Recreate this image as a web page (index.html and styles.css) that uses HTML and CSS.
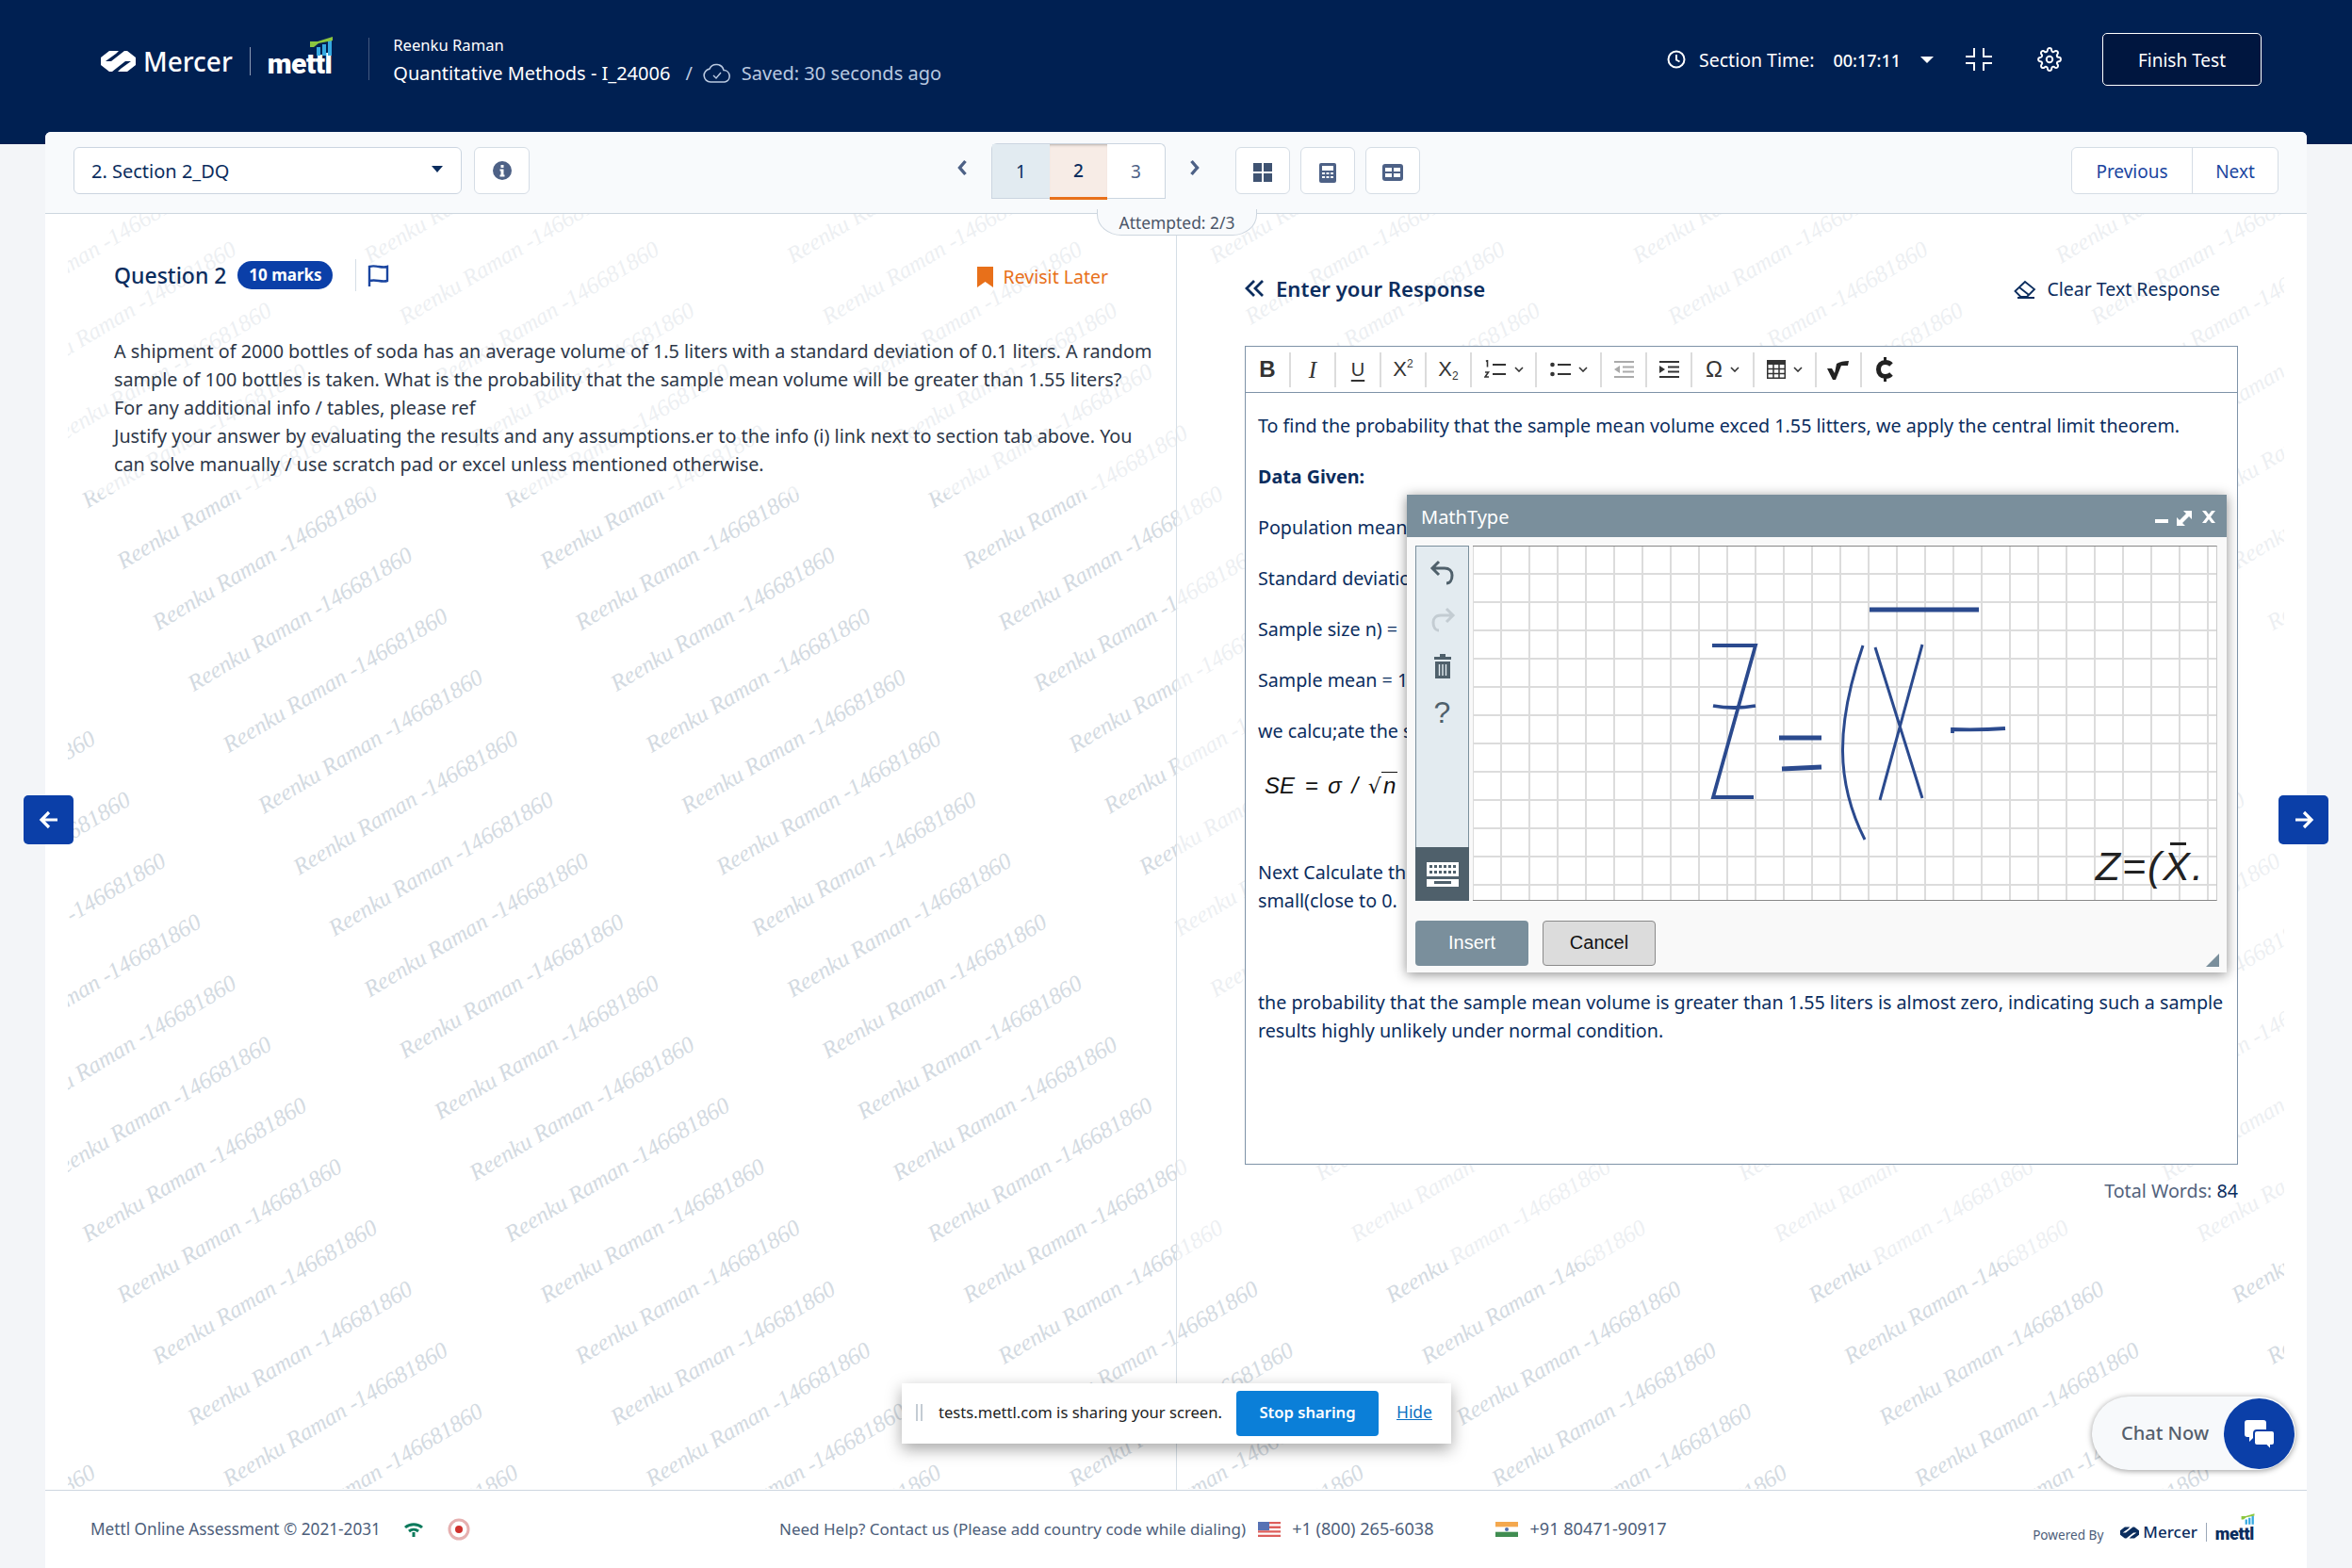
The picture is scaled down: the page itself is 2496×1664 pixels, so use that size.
FILE: index.html
```html
<!DOCTYPE html>
<html lang="en">
<head>
<meta charset="utf-8">
<title>Mettl Online Assessment</title>
<link rel="stylesheet" href="styles.css">
</head>
<body>
<header class="topbar">
  <div class="brand">
    <svg class="mercer-mark" viewBox="0 0 37 22" aria-hidden="true"><path fill="#fff" d="M0 7 9 0h10l-3 3-11 8 6 0 14-11h3l9 7v8l-9 7H18l3-3 11-8h-6L12 22H9l-9-7z"/></svg>
    <span class="mercer-word">Mercer</span>
    <span class="brand-rule"></span>
    <span class="mettl-word">mettl
      <svg class="mettl-bars" viewBox="0 0 26 20" aria-hidden="true"><path fill="#36a9e1" d="M8 11h4v9H8zM14 8h4v12h-4zM20 4h4v16h-4z"/><path fill="#8cc63f" d="M1 5v6l4 0 5-4 15-3V0L9 5z"/></svg>
    </span>
  </div>
  <span class="top-rule"></span>
  <div class="who">
    <div class="who-name">Reenku Raman</div>
    <div class="who-test"><span>Quantitative Methods - I_24006</span><span class="slash">/</span>
      <svg class="cloud" viewBox="0 0 32 24" aria-hidden="true"><path fill="none" stroke="#b9c9e0" stroke-width="1.6" d="M24 21H9a7 7 0 0 1-1-13.9A8 8 0 0 1 23 8.500a6.300 6.300 0 0 1 1 12.500z"/><path fill="none" stroke="#b9c9e0" stroke-width="1.4" d="m12 14 3 3 5-6"/></svg>
      <span class="saved">Saved: 30 seconds ago</span></div>
  </div>
  <div class="top-right">
    <svg class="clock" viewBox="0 0 22 22" aria-hidden="true"><circle cx="11" cy="11" r="8.500" fill="none" stroke="#fff" stroke-width="2"/><path fill="none" stroke="#fff" stroke-width="2" d="M11 6v5.500l3.500 2"/></svg>
    <span class="time-label">Section Time:</span>
    <span class="time-value">00:17:11</span>
    <span class="time-caret"></span>
    <svg class="compress" viewBox="0 0 28 24" aria-hidden="true"><path fill="none" stroke="#fff" stroke-width="2" d="M9 0v9H0M19 0v9h9M9 24v-8H0M19 24v-8h9"/></svg>
    <svg class="gear" viewBox="0 0 24 24" aria-hidden="true"><circle cx="12" cy="12" r="3" fill="none" stroke="#fff" stroke-width="1.800"/><path fill="none" stroke="#fff" stroke-width="1.800" d="M19.400 15a1.650 1.650 0 0 0 .33 1.820l.06.06a2 2 0 0 1 0 2.830 2 2 0 0 1-2.830 0l-.06-.06a1.650 1.650 0 0 0-1.820-.33 1.650 1.650 0 0 0-1 1.510V21a2 2 0 0 1-2 2 2 2 0 0 1-2-2v-.09A1.650 1.650 0 0 0 9 19.400a1.650 1.650 0 0 0-1.820.33l-.06.06a2 2 0 0 1-2.830 0 2 2 0 0 1 0-2.830l.06-.06a1.650 1.650 0 0 0 .33-1.820 1.650 1.650 0 0 0-1.510-1H3a2 2 0 0 1-2-2 2 2 0 0 1 2-2h.09A1.650 1.650 0 0 0 4.600 9a1.650 1.650 0 0 0-.33-1.820l-.06-.06a2 2 0 0 1 0-2.830 2 2 0 0 1 2.830 0l.06.06a1.650 1.650 0 0 0 1.820.33H9a1.650 1.650 0 0 0 1-1.510V3a2 2 0 0 1 2-2 2 2 0 0 1 2 2v.09a1.650 1.650 0 0 0 1 1.510 1.650 1.650 0 0 0 1.820-.33l.06-.06a2 2 0 0 1 2.830 0 2 2 0 0 1 0 2.830l-.06.06a1.650 1.650 0 0 0-.33 1.820V9a1.650 1.650 0 0 0 1.510 1H21a2 2 0 0 1 2 2 2 2 0 0 1-2 2h-.09a1.650 1.650 0 0 0-1.510 1z"/></svg>
    <button class="finish">Finish Test</button>
  </div>
</header>

<main class="sheet">
  <div class="strip">
    <div class="section-select"><span>2. Section 2_DQ</span><i class="caret"></i></div>
    <div class="square info"><svg viewBox="0 0 20 20" aria-hidden="true"><circle cx="10" cy="10" r="10" fill="#4d6186"/><rect x="8.500" y="4" width="3" height="3" fill="#fff"/><path fill="#fff" d="M7.500 8.500h4v6h1v2h-5v-2h1v-4h-1z"/></svg></div>
    <svg class="nav-chev left-chev" viewBox="0 0 12 18" aria-hidden="true"><path fill="none" stroke="#4d6186" stroke-width="3.400" d="M9.500 2 3.500 9l6 7"/></svg>
    <div class="pager"><span class="cell seen">1</span><span class="cell current">2</span><span class="cell">3</span></div>
    <svg class="nav-chev right-chev" viewBox="0 0 12 18" aria-hidden="true"><path fill="none" stroke="#4d6186" stroke-width="3.400" d="m2.500 2 6 7-6 7"/></svg>
    <div class="square tool"><svg width="20" height="20" viewBox="0 0 20 20" aria-hidden="true"><path fill="#3f5372" d="M0 0h9v9H0zM11 0h9v9h-9zM0 11h9v9H0zM11 11h9v9h-9z"/></svg></div>
    <div class="square tool"><svg width="18" height="21" viewBox="0 0 18 21" aria-hidden="true"><rect width="18" height="21" rx="2" fill="#4d6186"/><rect x="3" y="3" width="12" height="5" fill="#fff"/><path fill="#fff" d="M3 10h3v2H3zM7.500 10h3v2h-3zM12 10h3v2h-3zM3 14h3v2H3zM7.500 14h3v2h-3zM12 14h3v2h-3z"/></svg></div>
    <div class="square tool"><svg width="22" height="18" viewBox="0 0 22 18" aria-hidden="true"><rect width="22" height="18" rx="3" fill="#4d6186"/><path fill="#fff" d="M3 4h7v4H3zM12 4h7v4h-7zM3 10h7v4H3zM12 10h7v4h-7z"/></svg></div>
    <div class="prev-next"><span class="pn-prev">Previous</span><span class="pn-next">Next</span></div>
  </div>

  <div class="stage">
    <svg class="watermark" width="2352" height="1353" aria-hidden="true">
      <defs>
        <text id="wm-line" class="wm-text" transform="rotate(-31)">Reenku Raman -146681860</text>
        <g id="wm-col">
          <use href="#wm-line" x="0" y="0"/>
          <use href="#wm-line" transform="translate(37.4 64.9)"/>
          <use href="#wm-line" transform="translate(74.8 129.8)"/>
          <use href="#wm-line" transform="translate(112.2 194.7)"/>
          <use href="#wm-line" transform="translate(149.6 259.6)"/>
          <use href="#wm-line" transform="translate(187 324.5)"/>
          <use href="#wm-line" transform="translate(224.4 389.4)"/>
          <use href="#wm-line" transform="translate(261.8 454.3)"/>
          <use href="#wm-line" transform="translate(299.2 519.2)"/>
          <use href="#wm-line" transform="translate(336.6 584.1)"/>
          <use href="#wm-line" transform="translate(374 649)"/>
          <use href="#wm-line" transform="translate(411.4 713.9)"/>
          <use href="#wm-line" transform="translate(448.8 778.8)"/>
          <use href="#wm-line" transform="translate(486.2 843.7)"/>
          <use href="#wm-line" transform="translate(523.6 908.6)"/>
          <use href="#wm-line" transform="translate(561 973.5)"/>
          <use href="#wm-line" transform="translate(598.4 1038.4)"/>
          <use href="#wm-line" transform="translate(635.8 1103.3)"/>
          <use href="#wm-line" transform="translate(673.2 1168.2)"/>
          <use href="#wm-line" transform="translate(710.6 1233.1)"/>
          <use href="#wm-line" transform="translate(748 1298)"/>
          <use href="#wm-line" transform="translate(785.4 1362.9)"/>
          <use href="#wm-line" transform="translate(822.8 1427.8)"/>
        </g>
      </defs>
      <use href="#wm-col" transform="translate(-1026 53)"/>
      <use href="#wm-col" transform="translate(-577.2 53)"/>
      <use href="#wm-col" transform="translate(-128.4 53)"/>
      <use href="#wm-col" transform="translate(320.4 53)"/>
      <use href="#wm-col" transform="translate(769.2 53)"/>
      <use href="#wm-col" transform="translate(1218 53)"/>
      <use href="#wm-col" transform="translate(1666.8 53)"/>
      <use href="#wm-col" transform="translate(2115.6 53)"/>
    </svg>

    <section class="panel question-panel">
      <div class="veil question-veil">
        <div class="q-head">
          <h2 class="q-title">Question 2</h2>
          <span class="badge">10 marks</span>
          <span class="q-rule"></span>
          <svg class="flag" viewBox="0 0 23 23" aria-hidden="true"><path fill="none" stroke="#1a45a0" stroke-width="2.400" d="M2 23V2c5-1.500 7 0 10 0 3 .5 6 1 9 0v15c-3 1-6 .5-9 0s-6-1-10 0"/></svg>
          <div class="revisit"><svg viewBox="0 0 17 22" aria-hidden="true"><path fill="#e8701a" d="M0 0h17v22l-8.500-6L0 22z"/></svg><span>Revisit Later</span></div>
        </div>
        <p class="q-text">A shipment of 2000 bottles of soda has an average volume of 1.5 liters with a standard deviation of 0.1 liters. A random<br>sample of 100 bottles is taken. What is the probability that the sample mean volume will be greater than 1.55 liters?<br>For any additional info / tables, please ref<br>Justify your answer by evaluating the results and any assumptions.er to the info (i) link next to section tab above. You<br>can solve manually / use scratch pad or excel unless mentioned otherwise.</p>
      </div>
    </section>

    <section class="panel response-panel">
      <div class="veil response-veil">
        <div class="r-head">
          <svg class="dbl-chev" viewBox="0 0 20 18" aria-hidden="true"><path fill="none" stroke="#0b2d5e" stroke-width="2.800" d="M10 1 2 9l8 8M19 1l-8 8 8 8"/></svg>
          <h2 class="r-title">Enter your Response</h2>
          <div class="clear-text"><svg viewBox="0 0 24 20" aria-hidden="true"><path fill="none" stroke="#0b2d5e" stroke-width="1.800" d="M1.500 12 12 2l10 8-8 8H7.500zM6 8l9.500 7.500M4 19h18"/></svg><span>Clear Text Response</span></div>
        </div>
        <div class="editor">
          <div class="ed-tools">
            <span class="ed-btn ed-b">B</span>
            <span class="ed-btn ed-i">I</span>
            <span class="ed-btn ed-u">U</span>
            <span class="ed-btn ed-x">X<sup>2</sup></span>
            <span class="ed-btn ed-x">X<sub>2</sub></span>
            <span class="ed-btn wide"><svg width="24" height="20" viewBox="0 0 24 20" aria-hidden="true"><path stroke="#333" stroke-width="2" d="M9 5h14M9 15h14"/><path stroke="#333" stroke-width="1.600" fill="none" d="M2 1.500l1.500-1v7M1 13h3.500l-3.500 5h4"/></svg><svg class="mini" viewBox="0 0 10 6" aria-hidden="true"><path fill="none" stroke="#333" stroke-width="1.600" d="m1 1 4 4 4-4"/></svg></span>
            <span class="ed-btn wide"><svg width="22" height="20" viewBox="0 0 22 20" aria-hidden="true"><path stroke="#333" stroke-width="2" d="M8 5h14M8 15h14"/><circle cx="2.500" cy="5" r="2.300" fill="#333"/><circle cx="2.500" cy="15" r="2.300" fill="#333"/></svg><svg class="mini" viewBox="0 0 10 6" aria-hidden="true"><path fill="none" stroke="#333" stroke-width="1.600" d="m1 1 4 4 4-4"/></svg></span>
            <span class="ed-btn"><svg width="21" height="18" viewBox="0 0 21 18" aria-hidden="true"><path stroke="#aaa" stroke-width="2" fill="none" d="M0 1h21M9 6.500h12M9 11.500h12M0 17h21"/><path fill="#aaa" d="M6 5v8L0 9z"/></svg></span>
            <span class="ed-btn"><svg width="21" height="18" viewBox="0 0 21 18" aria-hidden="true"><path stroke="#333" stroke-width="2" fill="none" d="M0 1h21M9 6.500h12M9 11.500h12M0 17h21"/><path fill="#333" d="M0 5v8l6-4z"/></svg></span>
            <span class="ed-btn wide-o"><span class="omega">Ω</span><svg class="mini" viewBox="0 0 10 6" aria-hidden="true"><path fill="none" stroke="#333" stroke-width="1.600" d="m1 1 4 4 4-4"/></svg></span>
            <span class="ed-btn wide-o"><svg width="20" height="20" viewBox="0 0 20 20" aria-hidden="true"><path fill="#333" d="M0 0h20v5H0z"/><path fill="none" stroke="#333" stroke-width="1.500" d="M.75 1v18.250h18.500V1M.75 9.500h18.500M.75 14.500h18.500M7 4v15M13 4v15"/></svg><svg class="mini" viewBox="0 0 10 6" aria-hidden="true"><path fill="none" stroke="#333" stroke-width="1.600" d="m1 1 4 4 4-4"/></svg></span>
            <span class="ed-btn"><svg width="24" height="22" viewBox="0 0 24 22" aria-hidden="true"><path fill="#222" d="M0 10h5l3 5L10 5c3-2 8-3 13-3l-1 5h-7L9 22H6z"/></svg></span>
            <span class="ed-btn last"><svg width="20" height="26" viewBox="0 0 20 26" aria-hidden="true"><path fill="none" stroke="#222" stroke-width="5" d="M17 8c-1.500-1.500-3.500-2.500-6-2.500C6.500 5.500 3.500 8.500 3.500 13s3 7.500 7.500 7.500c2.500 0 4.500-1 6-2.500"/><path fill="#222" d="M9 0h3v4H9zM9 22h3v4H9z"/></svg></span>
          </div>
          <div class="ed-body">
            <p>To find the probability that the sample mean volume exced 1.55 litters, we apply the central limit theorem.</p>
            <p><strong>Data Given:</strong></p>
            <p>Population mean</p>
            <p>Standard deviatio</p>
            <p>Sample size n) =</p>
            <p>Sample mean = 1</p>
            <p>we calcu;ate the s</p>
            <p class="equation">SE = σ / <span class="radical">√</span><span class="under-root">n</span></p>
            <p>Next Calculate th<br>small(close to 0.</p>
            <p class="blank"></p>
            <p>the probability that the sample mean volume is greater than 1.55 liters is almost zero, indicating such a sample<br>results highly unlikely under normal condition.</p>
          </div>
        </div>
        <div class="word-count">Total Words: <b>84</b></div>
      </div>
    </section>

    <div class="attempted">Attempted: 2/3</div>

    <div class="mathtype">
      <div class="mt-title"><span>MathType</span>
        <svg class="mt-ctrl" viewBox="0 0 66 20" aria-hidden="true"><path fill="#fff" d="M0 13h14v4H0zM26 14l7-7-3-3h9v9l-3-3-7 7 3 3h-9v-9zM50 4h4l3 4 3-4h4l-5 6.500L64 17h-4l-3-4-3 4h-4l5-6.500z"/></svg>
      </div>
      <div class="mt-work">
        <div class="mt-side">
          <div class="mt-side-tools">
            <svg viewBox="0 0 30 30" width="30" height="30" aria-hidden="true"><path fill="none" stroke="#4f606b" stroke-width="3" d="M11 3 4 10l7 7M4 10h13c5 0 8 3 8 7.500S23 26 19 26"/></svg>
            <svg viewBox="0 0 30 30" width="30" height="30" aria-hidden="true"><path fill="none" stroke="#c3ccd2" stroke-width="3" d="m19 3 7 7-7 7M26 10H13c-5 0-8 3-8 7.500S7 26 11 26"/></svg>
            <svg class="mt-trash" viewBox="0 0 20 26" width="20" height="26" aria-hidden="true"><path fill="#4f606b" d="M7 0h6v3h6v3H1V3h6zM2 8h16v18H2z"/><path stroke="#e3ebf0" stroke-width="1.400" d="M6.500 11v12M10 11v12M13.500 11v12"/></svg>
            <span class="mt-q">?</span>
          </div>
          <div class="mt-kbd"><svg viewBox="0 0 34 26" width="34" height="26" aria-hidden="true"><path fill="#fff" d="M0 0h34v15H0zM0 18h34v8H0z"/><path fill="#4f606b" d="M3 3h3v3H3zM8 3h3v3H8zM13 3h3v3h-3zM18 3h3v3h-3zM23 3h3v3h-3zM28 3h3v3h-3zM3 9h3v3H3zM8 9h3v3H8zM13 9h3v3h-3zM18 9h3v3h-3zM23 9h3v3h-3zM28 9h3v3h-3zM8 20h18v3H8z"/></svg></div>
        </div>
        <div class="mt-canvas">
          <svg class="ink" width="790" height="376" viewBox="0 0 790 376" aria-hidden="true"><g fill="none" stroke="#2b4a8e" stroke-width="3.800">
            <path d="M254 105h46l-45 161h43M255 169q22 4 45 0"/><path stroke-width="5" d="M325 203h45M328 236l42-2"/><path stroke-width="3" d="M414 105c-29 85-29 145 2 206"/><path stroke-width="3" d="m427 107 50 160M477 104l-45 165"/><path stroke-width="5" d="M421 67h116"/><path d="M509 198v-4q28 1 56-1"/></g></svg>
          <div class="mt-result">Z=(<span class="xbar">X</span>.</div>
        </div>
      </div>
      <div class="mt-actions"><button class="mt-insert">Insert</button><button class="mt-cancel">Cancel</button></div>
      <i class="mt-grip"></i>
    </div>

    <div class="share-bar">
      <span class="grip-bars"></span>
      <span class="share-msg">tests.mettl.com is sharing your screen.</span>
      <button class="stop-share">Stop sharing</button>
      <a class="hide-link">Hide</a>
    </div>

    <div class="chat-pill">
      <span class="chat-label">Chat Now</span>
      <span class="chat-disc"><svg viewBox="0 0 34 34" width="34" height="34" aria-hidden="true"><path fill="#fff" d="M4 2h17a3 3 0 0 1 3 3v12a3 3 0 0 1-3 3H11l-5 5v-5H4a3 3 0 0 1-3-3V5a3 3 0 0 1 3-3z"/><path fill="#fff" stroke="#0b3fa8" stroke-width="2" d="M14 13h16a3 3 0 0 1 3 3v10a3 3 0 0 1-3 3h-1v5l-5-5H14a3 3 0 0 1-3-3V16a3 3 0 0 1 3-3z"/></svg></span>
    </div>
  </div>

  <footer class="foot">
    <div class="foot-left">
      <span>Mettl Online Assessment © 2021-2031</span>
      <svg class="wifi" viewBox="0 0 22 16" aria-hidden="true"><path fill="none" stroke="#0b7a5c" stroke-width="3" d="M2 6c5-4.500 13-4.500 18 0M6 10c3-2.500 7-2.500 10 0"/><rect x="9.500" y="11" width="3" height="5" fill="#0b7a5c"/></svg>
      <svg class="rec" viewBox="0 0 24 24" aria-hidden="true"><circle cx="12" cy="12" r="10" fill="none" stroke="#e6b0b0" stroke-width="3"/><circle cx="12" cy="12" r="4" fill="#d0312d"/></svg>
    </div>
    <div class="foot-help">
      <span>Need Help? Contact us (Please add country code while dialing)</span>
      <svg class="flag-mini" viewBox="0 0 24 16" aria-hidden="true"><rect width="24" height="16" fill="#fff"/><path fill="#d8433f" d="M0 0h24v2.300H0zM0 4.600h24v2.300H0zM0 9.200h24v2.300H0zM0 13.700h24V16H0z"/><rect width="12" height="9" fill="#3b5aa8"/></svg>
      <span class="ph">+1 (800) 265-6038</span>
      <svg class="flag-mini flag-in" viewBox="0 0 24 16" aria-hidden="true"><rect width="24" height="16" fill="#fff"/><rect width="24" height="5.300" fill="#f39a30"/><rect y="10.700" width="24" height="5.300" fill="#1f7a33"/><circle cx="12" cy="8" r="2" fill="#33589e"/></svg>
      <span class="ph">+91 80471-90917</span>
    </div>
    <div class="foot-power">
      <span class="powered">Powered By</span>
      <svg class="mercer-mark small" viewBox="0 0 37 22" aria-hidden="true"><path fill="#0b2d5e" d="M0 7 9 0h10l-3 3-11 8 6 0 14-11h3l9 7v8l-9 7H18l3-3 11-8h-6L12 22H9l-9-7z"/></svg>
      <span class="mercer-word small">Mercer</span>
      <span class="brand-rule small"></span>
      <span class="mettl-word small">mettl
        <svg class="mettl-bars" viewBox="0 0 26 20" aria-hidden="true"><path fill="#36a9e1" d="M8 11h4v9H8zM14 8h4v12h-4zM20 4h4v16h-4z"/><path fill="#8cc63f" d="M1 5v6l4 0 5-4 15-3V0L9 5z"/></svg>
      </span>
    </div>
  </footer>
</main>

<button class="side-arrow side-left"><svg viewBox="0 0 24 24" width="24" height="24" aria-hidden="true"><path fill="none" stroke="#fff" stroke-width="3.200" d="M12 4l-8 8 8 8M4 12h17"/></svg></button>
<button class="side-arrow side-right"><svg viewBox="0 0 24 24" width="24" height="24" aria-hidden="true"><path fill="none" stroke="#fff" stroke-width="3.200" d="m12 4 8 8-8 8M20 12H3"/></svg></button>
</body>
</html>
```

FILE: styles.css
```css
* { box-sizing: border-box; }
html, body { margin: 0; padding: 0; }
body {
  width: 2496px; height: 1664px; overflow: hidden; position: relative;
  background: #f3f5f8; color: #2d3748;
  font-family: "Noto Sans", "Open Sans", sans-serif; font-size: 20px; line-height: 30px;
}
p, h2 { margin: 0; }
button { font-family: inherit; cursor: pointer; }

.topbar {
  height: 153px; background: #002052; color: #fff; padding: 35px 96px 0 107px;
  display: flex; align-items: flex-start;
}
.brand { display: flex; align-items: center; height: 60px; }
.mercer-mark { width: 37px; height: 22px; }
.mercer-word { font-size: 28px; font-weight: 500; margin-left: 8px; line-height: 30px; }
.brand-rule { width: 1px; height: 30px; background: #8c9bb4; margin: 0 18px; }
.mettl-word {
  position: relative; font-family: "Roboto", sans-serif; font-weight: 900; font-size: 30px; line-height: 30px;
  letter-spacing: -0.5px; display: inline-block; margin-top: 6px;
}
.mettl-bars { position: absolute; right: -2px; top: -14px; width: 26px; height: 20px; }
.top-rule { width: 1px; height: 45px; background: #44597f; margin: 5px 25px 0 39px; }
.who { line-height: 30px; }
.who-name { font-size: 16.6px; margin-top: 0; line-height: 26px; }
.who-test { font-size: 20px; display: flex; align-items: center; margin-top: 2px; }
.slash { color: #b9c9e0; margin: 0 10px 0 16px; }
.cloud { width: 32px; height: 24px; margin: 0 10px 0 0; }
.saved { color: #b9c9e0; }
.top-right { margin-left: auto; display: flex; align-items: center; height: 56px; }
.clock { width: 22px; height: 22px; margin-right: 13px; }
.time-label { font-size: 19.5px; margin-top: 2px; }
.time-value { font-size: 18px; font-weight: 500; margin: 2px 0 0 20px; }
.time-caret { width: 0; height: 0; border: 7px solid transparent; border-top: 7px solid #fff; border-bottom: 0; margin-left: 21px; }
.compress { width: 28px; height: 24px; margin-left: 34px; }
.gear { width: 26px; height: 26px; margin-left: 48px; }
.finish {
  width: 169px; height: 56px; margin-left: 43px; padding-top: 3px; background: #00163f; color: #fff; font-size: 19px;
  border: 1px solid #fff; border-radius: 5px;
}

.sheet {
  margin: -13px 48px 0; height: 1524px; background: #fff; border-radius: 6px 6px 0 0;
  display: flex; flex-direction: column; position: relative; overflow: hidden;
}
.strip {
  height: 87px; flex: none; background: #f8fafc; border-bottom: 1px solid #cdd6df;
  padding: 16px 30px 0; display: flex; align-items: flex-start;
}
.section-select {
  width: 412px; height: 50px; background: #fff; border: 1px solid #cbd5e0; border-radius: 6px;
  display: flex; align-items: center; justify-content: space-between; padding: 2px 19px 0 18px; color: #0b2d5e; font-size: 20px;
}
.caret { width: 0; height: 0; border: 6px solid transparent; border-top: 7px solid #0b2d5e; border-bottom: 0; margin-top: -6px; }
.square {
  width: 59px; height: 50px; background: #fff; border: 1px solid #d5dde5; border-radius: 6px;
  display: flex; align-items: center; justify-content: center; flex: none;
}
.info { margin-left: 13px; }
.info svg { width: 20px; height: 20px; }
.nav-chev { width: 12px; height: 18px; flex: none; margin-top: 13px; }
.left-chev { margin-left: 453px; }
.pager {
  margin: -4px 0 0 25px; width: 185px; height: 59px; display: flex; border: 1px solid #cbd5e0; border-radius: 6px 6px 0 0; border-bottom: 0;
  background: #fff; color: #4d6186; font-size: 19px; position: relative;
}
.cell { flex: 1; display: flex; align-items: center; justify-content: center; }
.cell.seen { background: #e2ebf1; color: #0b2d5e; }
.cell.current { background: #f7ece6; color: #0b2d5e; font-weight: 500; box-shadow: inset 0 3px 3px -2px #b5aca6; border-bottom: 3px solid #e8701a; height: 59px; }
.cell.seen, .cell:last-child { border-bottom: 1px solid #cbd5e0; height: 58px; }
.right-chev { margin-left: 25px; margin-right: 37px; }
.tool { width: 58px; margin-right: 11px; padding-top: 4px; }
.prev-next {
  margin-left: auto; width: 220px; height: 50px; background: #fff; border: 1px solid #d5dde5; border-radius: 6px;
  display: flex; color: #1a45a0; font-size: 19px;
}
.pn-prev { width: 128px; padding-top: 2px; border-right: 1px solid #d5dde5; display: flex; align-items: center; justify-content: center; }
.pn-next { flex: 1; padding-top: 2px; display: flex; align-items: center; justify-content: center; }

.stage { flex: 1; position: relative; display: flex; background: #fff; }
.watermark { position: absolute; left: 24px; top: 0; z-index: 0; }
.wm-text { font-family: "Liberation Serif", serif; font-style: italic; font-size: 24.6px; fill: #d3dae1; }
.panel { position: relative; z-index: 1; }
.question-panel { width: 1201px; border-right: 1px solid #d5dee6; }
.response-panel { flex: 1; }
.veil { background: rgba(255, 255, 255, 0.58); }
.question-veil { height: 296px; margin-left: 24px; padding: 48px 24px 0 49px; }
.response-veil { height: 1113px; margin-right: 24px; padding: 62px 49px 0 72px; }

.q-head { display: flex; align-items: center; height: 34px; padding-right: 48px; }
.q-title { font-size: 23px; font-weight: 500; color: #0b2d5e; line-height: 34px; }
.badge {
  margin-left: 12px; width: 101px; height: 30px; border-radius: 15px; background: #0b3fa8; color: #fff;
  font-size: 17px; font-weight: 700; display: flex; align-items: center; justify-content: center;
}
.q-rule { width: 1px; height: 34px; background: #d5dee6; margin: 0 12px 0 24px; }
.flag { width: 23px; height: 23px; }
.revisit { margin-left: auto; display: flex; align-items: center; gap: 11px; color: #e8701a; font-size: 19.5px; margin-top: 3px; }
.revisit svg { width: 17px; height: 22px; }
.q-text { margin-top: 49px; white-space: nowrap; font-size: 19.78px; color: #2d3748; }

.r-head { display: flex; align-items: center; height: 34px; }
.dbl-chev { width: 20px; height: 18px; margin-right: 13px; }
.r-title { font-size: 22.1px; font-weight: 600; color: #0b2d5e; line-height: 34px; }
.clear-text { margin: 2px 0 0 auto; padding-right: 19px; display: flex; align-items: center; gap: 11px; color: #0b2d5e; font-size: 19.5px; }
.clear-text svg { width: 24px; height: 20px; }
.editor {
  margin-top: 44px; height: 869px; border: 1px solid #7f93a8; background: #fff;
}
.ed-tools { height: 49px; border-bottom: 1px solid #7f93a8; display: flex; align-items: center; }
.ed-btn {
  width: 48px; height: 37px; border-right: 2px solid #dcdcdc; display: flex; align-items: center; justify-content: center; gap: 8px;
  color: #333; font-family: "Liberation Sans", sans-serif; font-size: 22px; line-height: 1; flex: none;
}
.ed-btn.last { border-right: 0; }
.ed-btn.wide { width: 69px; }
.ed-btn.wide-o { width: 66px; }
.ed-b { font-weight: 700; font-size: 24px; }
.ed-i { font-family: "Liberation Serif", serif; font-style: italic; font-size: 25px; }
.ed-u { text-decoration: underline; font-size: 20px; text-underline-offset: 4px; }
.ed-btn.ed-x { gap: 0; }
.ed-x sup, .ed-x sub { font-size: 12px; line-height: 0; }
.ed-x sup { margin-top: -12px; }
.ed-x sub { margin-top: 14px; }
.omega { font-size: 24px; }
.mini { width: 10px; height: 6px; }
.ed-body { padding: 20px 13px 0; color: #0b2d5e; font-size: 19.7px; white-space: nowrap; }
.ed-body p { margin-bottom: 24px; min-height: 30px; }
.ed-body p.equation {
  height: 72px; padding-left: 7px; color: #111; font-family: "Liberation Sans", sans-serif; font-style: italic; font-size: 24px;
  line-height: 38px; word-spacing: 4px;
}
.radical { font-style: normal; font-family: "DejaVu Sans", sans-serif; font-size: 22px; }
.under-root { border-top: 1.5px solid #111; padding: 0 2px; }
.word-count { text-align: right; margin-top: 13px; color: #52627c; font-size: 19.7px; line-height: 30px; }
.word-count b { font-weight: 400; color: #0b2d5e; }

.attempted {
  position: absolute; left: 1116px; top: -5px; width: 170px; height: 28px; z-index: 2; background: #f8fafc;
  border: 1px solid #cdd6df; border-top: 0; border-radius: 0 0 26px 26px / 0 0 22px 22px;
  color: #4a5568; font-size: 17.4px; line-height: 28px; text-align: center;
}

.mathtype {
  position: absolute; left: 1445px; top: 298px; width: 870px; height: 507px; z-index: 3; background: #f9f9f9;
  box-shadow: 0 2px 12px rgba(0, 0, 0, 0.45); display: flex; flex-direction: column;
}
.mt-title {
  height: 45px; flex: none; background: #7a8f9c; color: #fff; font-size: 20px; padding: 2px 10px 0 15px;
  display: flex; align-items: center; justify-content: space-between;
}
.mt-ctrl { width: 66px; height: 20px; margin-top: -2px; }
.mt-work { display: flex; margin: 9px 10px 0 9px; gap: 4px; height: 377px; flex: none; }
.mt-side { width: 57px; flex: none; background: #e3ebf0; border: 1px solid #7a8f9c; border-bottom: 0; display: flex; flex-direction: column; }
.mt-side-tools { flex: 1; display: flex; flex-direction: column; align-items: center; padding-top: 13px; gap: 20px; }
.mt-trash { margin-top: 1px; }
.mt-q { font-family: "Liberation Sans", sans-serif; font-size: 32px; line-height: 28px; color: #4f606b; margin-top: 2px; }
.mt-kbd { height: 57px; margin: 0 -1px; background: #4f606b; display: flex; align-items: center; justify-content: center; }
.mt-canvas {
  flex: 1; position: relative; border-top: 1px solid #888; border-bottom: 1px solid #888; border-right: 1px solid #ccc;
  background-color: #fff;
  background-image:
    linear-gradient(#dcdcdc 2px, transparent 2px),
    linear-gradient(90deg, #dcdcdc 2px, transparent 2px);
  background-size: 30px 30px;
  background-position: -1px -2px;
}
.ink { position: absolute; left: 0; top: 0; }
.mt-result {
  position: absolute; right: 12px; top: 314px; color: #222; font-family: "Liberation Sans", sans-serif; font-style: italic; font-size: 43px; line-height: 50px; letter-spacing: 2px;
}
.xbar { position: relative; }
.xbar::before { content: ""; position: absolute; left: 8px; right: 6px; top: -1px; height: 3px; background: #222; }
.mt-actions { display: flex; gap: 15px; margin: 21px 0 0 9px; }
.mt-actions button { width: 120px; height: 48px; padding-bottom: 3px; border-radius: 4px; font-family: "Liberation Sans", sans-serif; font-size: 20px; }
.mt-insert { background: #7a8f9c; color: #fff; border: 0; }
.mt-cancel { background: #dcdcdc; color: #111; border: 1px solid #8a8a8a; }
.mt-grip {
  position: absolute; right: 8px; bottom: 6px; width: 0; height: 0;
  border-left: 14px solid transparent; border-bottom: 14px solid #7a8f9c;
}

.share-bar {
  position: absolute; left: 909px; top: 1241px; width: 583px; height: 64px; z-index: 4; background: #fff;
  box-shadow: 0 6px 16px rgba(0, 0, 0, 0.35); display: flex; align-items: center; padding: 0 0 2px 15px; font-size: 16.6px; color: #222;
}
.grip-bars { width: 7px; height: 18px; border-left: 2px solid #c4ccd4; border-right: 2px solid #c4ccd4; margin-right: 17px; }
.share-msg { white-space: nowrap; }
.stop-share {
  position: absolute; left: 355px; top: 8px; width: 151px; height: 48px; background: #0b7fd8; color: #fff; border: 0; border-radius: 4px; font-size: 16.6px; font-weight: 600; padding-bottom: 4px;
}
.hide-link { position: absolute; left: 525px; top: 15px; font-size: 17.4px; color: #0b6fc2; text-decoration: underline; }

.chat-pill {
  position: absolute; left: 2172px; top: 1255px; width: 216px; height: 78px; z-index: 4; background: #f7f9fb; border-radius: 39px;
  box-shadow: 0 1px 6px rgba(0, 0, 0, 0.4); display: flex; align-items: center; padding-left: 31px;
}
.chat-label { color: #555f6c; font-size: 20px; font-weight: 500; white-space: nowrap; }
.chat-disc { position: absolute; right: 1px; top: 2px; width: 75px; height: 75px; border-radius: 50%; background: #0b3fa8; display: flex; align-items: center; justify-content: center; }

.foot {
  height: 83px; flex: none; border-top: 1px solid #cdd6df; background: #fff; color: #4d5e7a; font-size: 17px;
  display: grid; grid-template-columns: 731px 1fr auto; align-items: center; padding: 0 56px 0 48px; white-space: nowrap;
}
.foot-left, .foot-help, .foot-power { display: flex; align-items: center; }
.foot-left span { font-size: 17.2px; }
.wifi { width: 22px; height: 16px; margin-left: 24px; }
.rec { width: 24px; height: 24px; margin-left: 25px; }
.flag-mini { width: 24px; height: 16px; margin: 0 12px 0 13px; opacity: .85; }
.flag-in { margin-left: 66px; }
.ph { font-size: 18.1px; margin-top: -2px; }
.foot-power { margin-top: 6px; }
.powered { font-size: 13.6px; margin-right: 18px; margin-top: 6px; }
.mercer-mark.small { width: 20px; height: 13px; }
.mercer-word.small { font-size: 17px; margin-left: 4px; color: #0b2d5e; font-weight: 500; }
.brand-rule.small { height: 20px; margin: 0 9px; background: #9aa7b8; }
.mettl-word.small { font-size: 18px; color: #0b2d5e; margin-top: 3px; letter-spacing: -0.3px; }
.mettl-word.small .mettl-bars { width: 15px; height: 12px; top: -7px; right: -1px; }

.side-arrow {
  position: absolute; top: 844px; width: 53px; height: 52px; border: 0; border-radius: 5px; background: #0b3fa8; z-index: 5;
  display: flex; align-items: center; justify-content: center; padding: 0;
}
.side-left { left: 25px; }
.side-right { left: 2418px; }
```
